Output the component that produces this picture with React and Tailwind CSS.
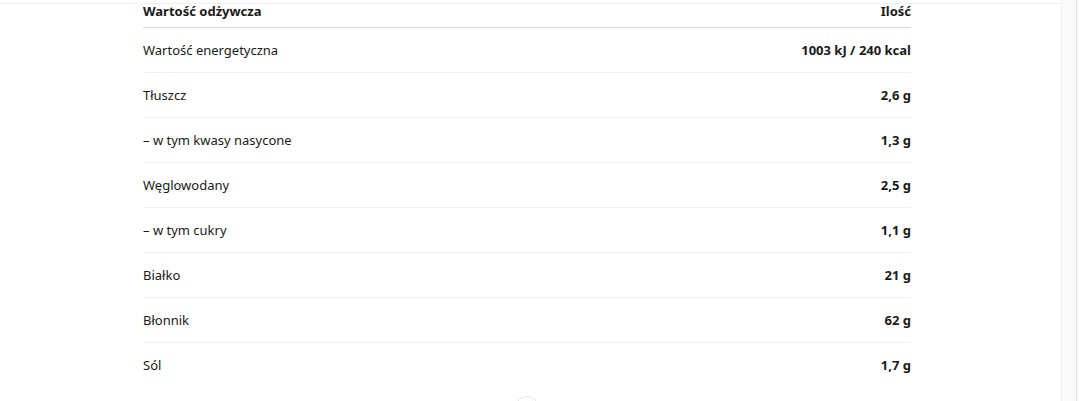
const rows = [
  ['Wartość energetyczna', '1003 kJ / 240 kcal'],
  ['Tłuszcz', '2,6 g'],
  ['– w tym kwasy nasycone', '1,3 g'],
  ['Węglowodany', '2,5 g'],
  ['– w tym cukry', '1,1 g'],
  ['Białko', '21 g'],
  ['Błonnik', '62 g'],
  ['Sól', '1,7 g'],
];

export default function App() {
  return (
    <div className="flex h-[401px] w-[1079px] overflow-hidden bg-white text-[13px] text-[#1a1a1a]" style={{ fontFamily: '"Noto Sans", sans-serif' }}>
      <div className="relative flex-1 pt-[3px]">
        <div className="border-t border-[#efefef]">
          <div className="ml-[143px] w-[768px]">
            <div className="flex h-[24px] items-center justify-between border-b border-[#dcdcdc] pb-[7px] font-bold">
              <span>Wartość odżywcza</span>
              <span>Ilość</span>
            </div>
            {rows.map(([name, value], i) => (
              <div
                key={name}
                className={i < rows.length - 1 ? 'flex h-[45px] items-center justify-between border-b border-[#f0f0f0] pt-px' : 'flex h-[45px] items-center justify-between pt-px'}
              >
                <span>{name}</span>
                <span className="font-bold">{value}</span>
              </div>
            ))}
          </div>
        </div>
        <div className="absolute left-[515px] top-[396px] h-[24px] w-[24px] rounded-full border border-[#e6e6e6] bg-white" />
      </div>
      <div className="w-[18px] border-l border-[#f3f3f3] bg-[#fafafa]">
        <div className="ml-[14px] h-full w-px bg-[#e2e2e2]" />
      </div>
    </div>
  );
}
